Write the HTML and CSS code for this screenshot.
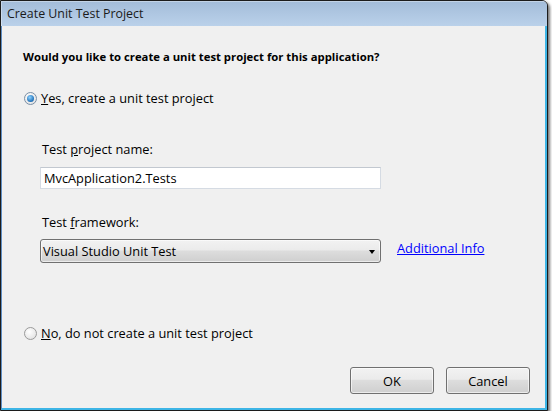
FILE: index.html
```html
<!DOCTYPE html>
<html>
<head>
<meta charset="utf-8">
<link rel="stylesheet" href="styles.css">
</head>
<body>
<div class="window">
  <div class="titlebar">Create Unit Test Project</div>
  <div class="client">
    <div class="question">Would you like to create a unit test project for this application?</div>
    <div class="option">
      <span class="radio checked"><span class="dot"></span></span>
      <span class="option-label"><u>Y</u>es, create a unit test project</span>
    </div>
    <div class="details">
      <div class="field-label">Test <u>p</u>roject name:</div>
      <div class="textbox">MvcApplication2.Tests</div>
      <div class="field-label framework">Test <u>f</u>ramework:</div>
      <div class="select-row">
        <div class="combo">
          <span>Visual Studio Unit Test</span>
          <span class="arrow"></span>
        </div>
        <a class="link" href="#">Additional Info</a>
      </div>
    </div>
    <div class="option no">
      <span class="radio"></span>
      <span class="option-label"><u>N</u>o, do not create a unit test project</span>
    </div>
    <div class="buttons">
      <div class="button">OK</div>
      <div class="button">Cancel</div>
    </div>
  </div>
</div>
</body>
</html>
```
FILE: styles.css
```css
html, body {
  margin: 0;
  padding: 0;
  background: #ffffff;
}
body {
  font-family: "Open Sans", "Noto Sans", sans-serif;
  font-size: 12.8px;
  color: #000;
}
.window {
  width: 548px;
  height: 411px;
  box-sizing: border-box;
  border: 1px solid #1c1c1c;
  border-top-right-radius: 6px;
  box-shadow: 2px 2px 3px rgba(0, 0, 0, 0.55);
  display: flex;
  flex-direction: column;
  background: #bcd3eb;
}
.titlebar {
  height: 25px;
  flex: none;
  box-sizing: border-box;
  padding: 5px 0 0 6px;
  line-height: 16px;
  font-size: 12.4px;
  color: #1a1a1a;
  background: linear-gradient(#a3bcd9, #bad1ea);
  border-top-right-radius: 5px;
  box-shadow: inset 1px 1px 0 rgba(255, 255, 255, 0.35);
}
.client {
  flex: 1;
  display: flex;
  flex-direction: column;
  background: #f0f0f0;
  border-left: 1px solid #5f8fc5;
  border-right: 2px solid #3db5e6;
  border-bottom: 2px solid #3db5e6;
  padding: 23px 15px 14px 21px;
  line-height: 16px;
}
.question {
  font-weight: bold;
  font-size: 11.3px;
}
.option {
  display: flex;
  align-items: center;
  margin-top: 25px;
  height: 16px;
}
.option.no {
  margin-top: 62px;
}
.radio {
  width: 11px;
  height: 11px;
  border-radius: 50%;
  border: 1px solid #9a9a9a;
  background: radial-gradient(circle at 40% 35%, #ffffff, #dcdcdc);
  margin-left: 1px;
  margin-right: 4px;
  display: flex;
  align-items: center;
  justify-content: center;
  flex: none;
}
.radio.checked {
  border-color: #7a8fa6;
}
.dot {
  width: 7px;
  height: 7px;
  border-radius: 50%;
  background: radial-gradient(circle at 40% 35%, #8fd3ff, #1e6fb8 70%, #0c3f7a);
}
.details {
  padding-left: 17px;
}
.field-label {
  margin-top: 35px;
  padding-left: 2px;
}
.field-label.framework {
  margin-top: 25px;
}
.textbox {
  margin-top: 10px;
  width: 341px;
  height: 22px;
  box-sizing: border-box;
  background: #fff;
  border: 1px solid #d5dbe3;
  border-top-color: #c2c8d0;
  padding: 2px 0 0 3px;
  line-height: 16px;
}
.select-row {
  display: flex;
  align-items: flex-start;
  margin-top: 9px;
}
.combo {
  width: 341px;
  height: 24px;
  box-sizing: border-box;
  border: 1px solid #707070;
  border-radius: 3px;
  background: linear-gradient(#f2f2f2 0%, #ebebeb 45%, #dddddd 50%, #cfcfcf 100%);
  box-shadow: inset 0 0 0 1px rgba(255, 255, 255, 0.6);
  display: flex;
  align-items: center;
  justify-content: space-between;
  padding: 0 4px 0 2px;
}
.arrow {
  width: 0;
  height: 0;
  border-left: 3.5px solid transparent;
  border-right: 3.5px solid transparent;
  border-top: 4px solid #000;
  margin-right: 1px;
  margin-top: 2px;
}
.link {
  margin-left: 16px;
  margin-top: 1px;
  color: #0000ff;
  text-decoration: underline;
}
.buttons {
  margin-top: auto;
  display: flex;
  justify-content: flex-end;
  gap: 12px;
}
.button {
  width: 84px;
  height: 27px;
  box-sizing: border-box;
  border: 1px solid #707070;
  border-radius: 3px;
  background: linear-gradient(#f2f2f2 0%, #ebebeb 45%, #dddddd 50%, #cfcfcf 100%);
  box-shadow: inset 0 0 0 1px rgba(255, 255, 255, 0.6);
  display: flex;
  align-items: center;
  justify-content: center;
}
```
